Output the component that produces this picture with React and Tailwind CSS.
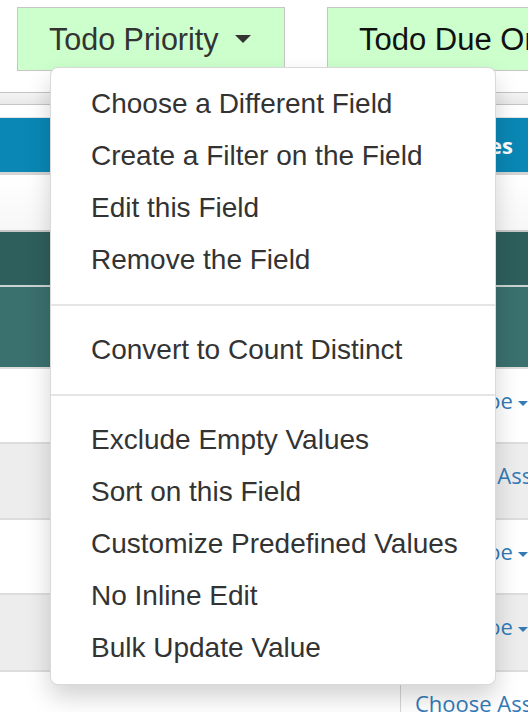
import { Fragment } from 'react'

const MENU_GROUPS = [
  ['Choose a Different Field', 'Create a Filter on the Field', 'Edit this Field', 'Remove the Field'],
  ['Convert to Count Distinct'],
  ['Exclude Empty Values', 'Sort on this Field', 'Customize Predefined Values', 'No Inline Edit', 'Bulk Update Value'],
]

const ROWS = [
  { label: 'Sofia Doe', caret: true, shaded: false, h: 'h-[75px]' },
  { label: 'Choose Assignee', caret: false, shaded: true, h: 'h-[76px]' },
  { label: 'Sofia Doe', caret: true, shaded: false, h: 'h-[75px]' },
  { label: 'Sofia Doe', caret: true, shaded: true, h: 'h-[77px]' },
  { label: 'Choose Assignee', caret: false, shaded: false, h: 'h-[75px]' },
]

function Caret({ className }) {
  return <span className={`inline-block w-0 h-0 border-x-transparent ${className}`} />
}

function FieldButton({ label, dropdown, className = '' }) {
  return (
    <div
      className={`h-[64px] shrink-0 flex items-center pl-[31px] bg-[#ccffcc] border border-[#c6c6c6] whitespace-nowrap ${className}`}
    >
      <span className={`leading-none ${dropdown ? 'text-[30.5px] text-[#333]' : 'text-[31px] text-[#111]'}`}>{label}</span>
      {dropdown && <Caret className="ml-[16px] border-x-[8px] border-t-[8px] border-t-[#333]" />}
    </div>
  )
}

function FieldMenu() {
  return (
    <div className="absolute left-[50px] top-[67px] w-[446px] bg-white border border-black/15 rounded-[8px] py-[10px] shadow-[0_12px_24px_rgba(0,0,0,0.175)] z-10">
      {MENU_GROUPS.map((group, gi) => (
        <Fragment key={gi}>
          {gi > 0 && <div className="my-[18px] h-[2px] bg-[#e5e5e5]" />}
          {group.map((item) => (
            <div key={item} className="h-[52px] flex items-center px-[40px] text-[28px] text-[#333] whitespace-nowrap">
              {item}
            </div>
          ))}
        </Fragment>
      ))}
    </div>
  )
}

export default function App() {
  return (
    <div className="relative w-[528px] h-[712px] overflow-hidden bg-white font-['Liberation_Sans',Arial,sans-serif]">
      <div className="flex gap-[42px] pl-[17px] pt-[7px]">
        <FieldButton label="Todo Priority" dropdown className="w-[268px]" />
        <FieldButton label="Todo Due On" className="w-[260px]" />
      </div>

      {/* table chrome under the field buttons */}
      <div className="mt-[21px] h-[13px] border-y border-[#c4c4c4] bg-gradient-to-b from-[#f4f4f4] to-[#e9e9e9]" />
      <div className="h-[12px]" />
      <div className="h-[58px] border-t border-[#e3e3e3] border-b-[3px] border-b-[#d4d4d4] bg-[#0a87b5] flex items-center justify-end pr-[15px]">
        <span className="font-['Open_Sans',sans-serif] font-bold text-[22px] text-white">Todo Values</span>
      </div>
      <div className="h-[55px] bg-gradient-to-b from-white to-[#f7f7f7]" />
      <div className="h-[55px] border-t-2 border-[#c8c8c8] bg-[#2e5f5d]" />
      <div className="h-[82px] border-t-2 border-[#c9d3d2] bg-[#3a706e]" />

      {ROWS.map((row, i) => (
        <div
          key={i}
          className={`${row.h} border-t-2 border-[#dddddd] flex ${row.shaded ? 'bg-[#ededed]' : 'bg-white'}`}
        >
          <div className="w-[400px] shrink-0" />
          <div className="flex-1 border-l border-[#d6d6d6] pl-[14px] pt-[16px] whitespace-nowrap font-['Open_Sans',sans-serif] text-[22px] leading-[30px] text-[#337ab7]">
            {row.label}
            {row.caret && (
              <Caret className="ml-[5px] align-middle border-x-[5px] border-t-[5px] border-t-[#337ab7]" />
            )}
          </div>
        </div>
      ))}

      <FieldMenu />
    </div>
  )
}
